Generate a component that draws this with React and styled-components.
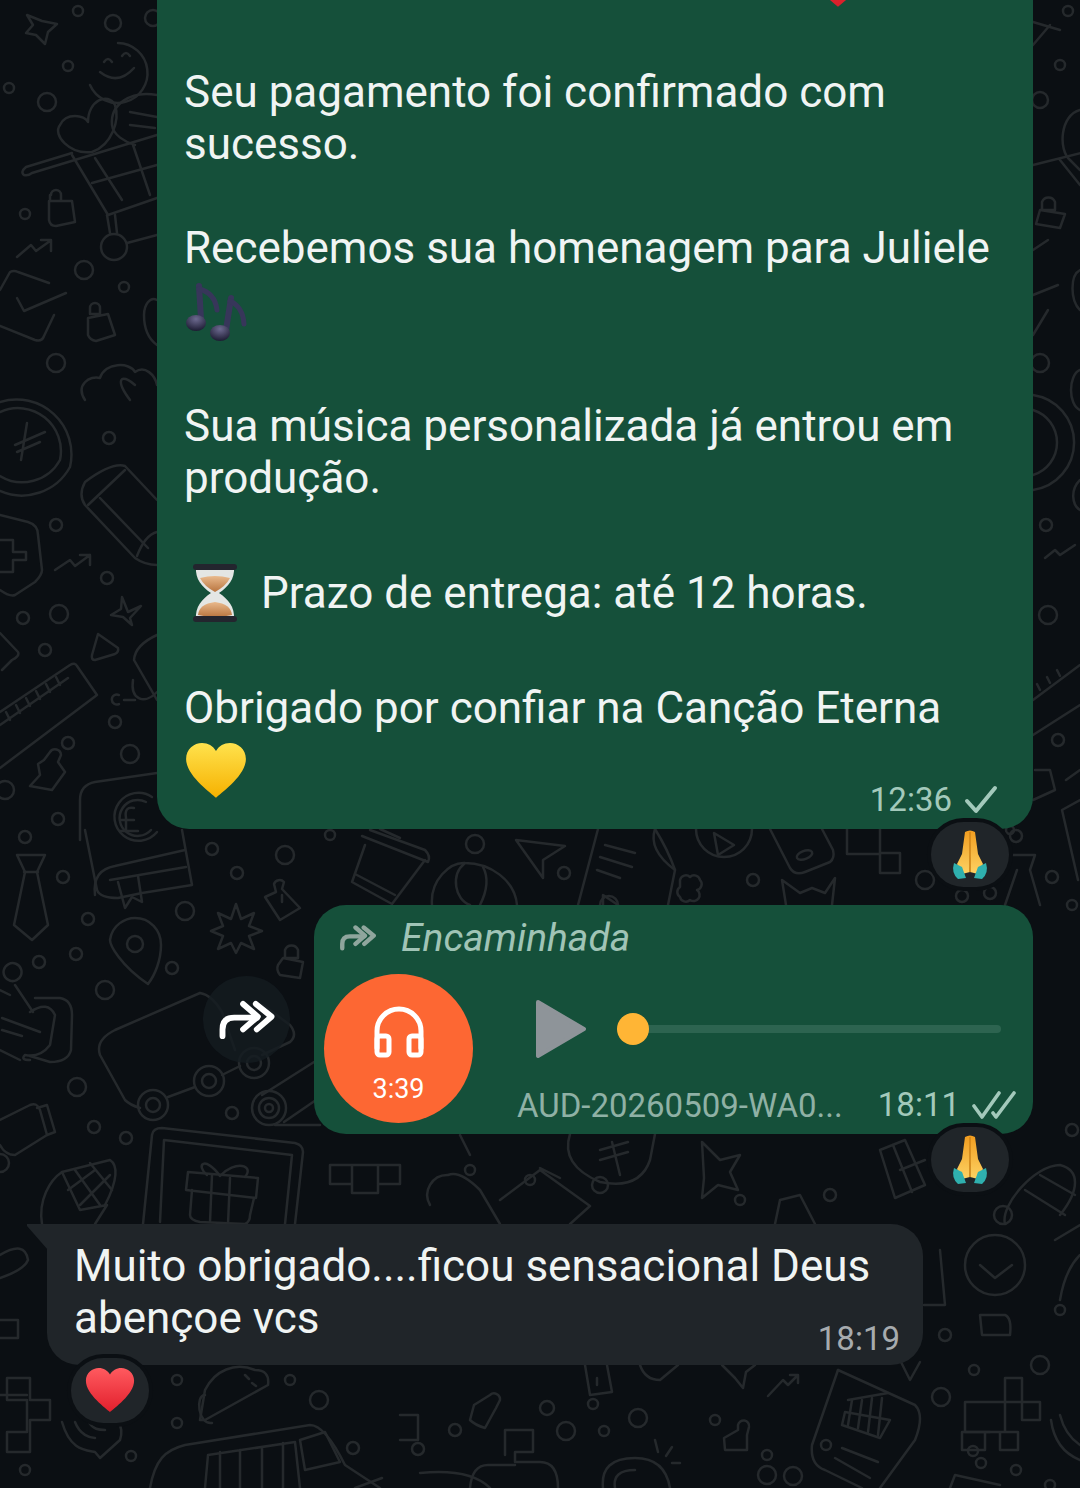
import React from 'react'
import styled, { createGlobalStyle } from 'styled-components'

const GlobalStyle = createGlobalStyle`
  html, body { margin: 0; padding: 0; background: #0b0f13; }
  * { box-sizing: border-box; }
`

const Screen = styled.div`
  position: relative;
  width: 1080px;
  height: 1488px;
  overflow: hidden;
  background: #0b0f13;
  font-family: Roboto, "Liberation Sans", sans-serif;
`

const Wallpaper = styled.svg`
  position: absolute;
  inset: 0;
  fill: none;
  stroke: #25292c;
  stroke-width: 2.5;
  stroke-linejoin: round;
  stroke-linecap: round;
`

const Thread = styled.div`
  position: relative;
  height: 100%;
  display: flex;
  flex-direction: column;
  justify-content: flex-end;
  padding: 0 47px 123px;
`

const Bubble = styled.div`
  position: relative;
  flex-shrink: 0;
  width: 876px;
  border-radius: 32px;
  color: #f0f4f3;
  font-size: 44px;
  white-space: nowrap;
  background: ${p => (p.$in ? '#202529' : '#15503a')};
`

const PaidBubble = styled(Bubble)`
  align-self: flex-end;
  padding: 0 35px 21px 27px;
  border-radius: 0 0 32px 32px;
`

const ThanksBubble = styled(Bubble)`
  margin-top: 90px;
  padding: 16px 23px 21px 27px;
  border-top-left-radius: 0;

  &::before {
    content: '';
    position: absolute;
    left: -20px;
    top: 0;
    width: 21px;
    height: 26px;
    background: #202529;
    clip-path: polygon(0 0, 100% 0, 100% 100%, 0 8%);
  }
`

const Line = styled.div`
  display: flex;
  align-items: ${p => (p.$emoji ? 'center' : 'baseline')};
  height: ${p => (p.$emoji ? 74 : 52)}px;
  line-height: 53px;
  margin-top: ${p => (p.$gap ? 52 : 0)}px;
`

const LastLine = styled(Line)`
  justify-content: space-between;
  align-items: ${p => (p.$emoji ? 'center' : 'flex-start')};
`

const TopHeart = styled.div`
  margin: 0 0 0 623px;
  transform: translateY(-10px);
`

const EmojiSlot = styled.div`
  display: flex;
  margin: 0 21px 0 6px;
`

const NoteSlot = styled.div`
  display: flex;
  margin-left: 1px;
`

const HeartSlot = styled.div`
  display: flex;
  margin-left: 1px;
`

const Meta = styled.div`
  display: flex;
  align-items: center;
  gap: 12px;
  height: 30px;
  font-size: 33px;
  line-height: 30px;
  color: ${p => (p.$in ? '#a6abae' : '#a3c9bb')};
  transform: translateY(${p => p.$y || 0}px);
`

const Reaction = styled.div`
  position: absolute;
  bottom: -58px;
  ${p => (p.$left ? 'left: 24px;' : 'right: 24px;')}
  display: flex;
  align-items: center;
  justify-content: center;
  width: 78px;
  height: 65px;
  border-radius: 33px;
  background: #202529;
  box-shadow: 0 0 0 4px #0b0f13;
`

const ForwardRow = styled.div`
  display: flex;
  flex-shrink: 0;
  align-items: center;
  justify-content: flex-end;
  gap: 24px;
  margin-top: 76px;
`

const ForwardButton = styled.div`
  display: flex;
  align-items: center;
  justify-content: center;
  width: 87px;
  height: 87px;
  border-radius: 50%;
  background: rgba(20, 27, 32, 0.8);
`

const AudioBubble = styled(Bubble)`
  width: 719px;
  padding: 0 0 11px 10px;
`

const ForwardedHead = styled.div`
  display: flex;
  align-items: center;
  gap: 25px;
  height: 69px;
  padding: 0 0 3px 16px;
  font-size: 39px;
  font-style: italic;
  color: #a0c4b6;
`

const AudioBody = styled.div`
  display: flex;
`

const Disc = styled.div`
  display: flex;
  flex-direction: column;
  align-items: center;
  flex-shrink: 0;
  width: 149px;
  height: 149px;
  padding-top: 32px;
  border-radius: 50%;
  background: #fd6733;
  color: #fff;
  font-size: 27px;
  line-height: 32px;
`

const DiscTime = styled.div`
  margin-top: 15px;
`

const AudioInfo = styled.div`
  flex: 1;
  display: flex;
  flex-direction: column;
`

const Player = styled.div`
  display: flex;
  align-items: center;
  height: 60px;
  margin-top: 25px;
  padding: 0 32px 0 62px;
`

const Scrubber = styled.div`
  position: relative;
  flex: 1;
  height: 8px;
  margin-left: 30px;
  border-radius: 4px;
  background: #2d6450;
`

const Knob = styled.div`
  position: absolute;
  left: 0;
  top: -12px;
  width: 32px;
  height: 32px;
  border-radius: 50%;
  background: #ffb535;
`

const FileRow = styled.div`
  display: flex;
  align-items: center;
  justify-content: space-between;
  height: 36px;
  margin-top: 28px;
  padding: 0 17px 0 44px;
  font-size: 33px;
  color: #8fb1a5;
`

const ForwardIcon = ({ size = 56, color = '#fff', weight = 6 }) => (
  <svg width={size} height={size * 0.7} viewBox="0 0 56 40" fill="none" stroke={color} strokeWidth={weight} strokeLinecap="round" strokeLinejoin="round">
    <path d="M3 37V30Q3 18 15 18H38" />
    <path d="M24 4L39 17L24 30" />
    <path d="M37 4L53 17L38 30" />
  </svg>
)

const Check = () => (
  <svg width="34" height="30" viewBox="0 0 34 30" fill="none" stroke="#a3c9bb" strokeWidth="4" strokeLinecap="round" strokeLinejoin="round">
    <path d="M3 16L12 26L31 3" />
  </svg>
)

const DoubleCheck = () => (
  <svg width="44" height="30" viewBox="0 0 44 30" fill="none" stroke="#a3c9bb" strokeWidth="3.6" strokeLinecap="round" strokeLinejoin="round">
    <path d="M2 16L10 27L27 3" />
    <path d="M21 23L24 27L42 3" />
  </svg>
)

const Heart = ({ id, from, to, width }) => (
  <svg width={width} height={width * 0.9} viewBox="0 0 62 56">
    <defs>
      <linearGradient id={id} x1="0" y1="0" x2="0" y2="1">
        <stop offset="0" stopColor={from} />
        <stop offset="1" stopColor={to} />
      </linearGradient>
    </defs>
    <path fill={`url(#${id})`} d="M31 55C27 51 1 33 1 16C1 6 9 0 17 0C23 0 28 3 31 8C34 3 39 0 45 0C53 0 61 6 61 16C61 33 35 51 31 55Z" />
  </svg>
)

const Pray = ({ id }) => (
  <svg width="38" height="50" viewBox="0 0 38 50">
    <defs>
      <linearGradient id={id} x1="0" y1="0" x2="0" y2="1">
        <stop offset="0" stopColor="#f19d1f" />
        <stop offset="1" stopColor="#fdd263" />
      </linearGradient>
    </defs>
    <path fill={`url(#${id})`} d="M14 2Q19-1 24 2L27 24L32 34L27 44L19 42L11 44L6 34L11 24Z" />
    <path fill="#c97f14" d="M18.4 2H19.6L19.8 42H18.2Z" />
    <path fill="#2fb0ae" d="M3 33L11 37L15 48L7 49Q0 43 3 33Z" />
    <path fill="#2fb0ae" d="M35 33L27 37L23 48L31 49Q38 43 35 33Z" />
  </svg>
)

const Notes = () => (
  <svg width="62" height="62" viewBox="0 0 62 62" fill="none">
    <defs>
      <radialGradient id="noteHead" cx="0.5" cy="0.25" r="0.8">
        <stop offset="0" stopColor="#6d6a90" />
        <stop offset="1" stopColor="#17162c" />
      </radialGradient>
    </defs>
    <g stroke="#37365a" strokeLinecap="round">
      <path d="M16 39L14 6" strokeWidth="6" />
      <path d="M14 9Q30 13 32 30" strokeWidth="5" />
      <path d="M41 50L46 18" strokeWidth="6" />
      <path d="M45 21Q58 27 59 44" strokeWidth="5" />
    </g>
    <ellipse cx="11" cy="43" rx="10" ry="8" fill="url(#noteHead)" />
    <ellipse cx="35" cy="53" rx="10" ry="8" fill="url(#noteHead)" />
  </svg>
)

const Hourglass = () => (
  <svg width="50" height="60" viewBox="0 0 50 60">
    <defs>
      <linearGradient id="sand" x1="0" y1="0" x2="0" y2="1">
        <stop offset="0" stopColor="#e9b98c" />
        <stop offset="1" stopColor="#b9753f" />
      </linearGradient>
    </defs>
    <path fill="#e4e6e4" d="M6 4H44C45 16 38 24 29 30C38 36 45 44 44 56H6C5 44 12 36 21 30C12 24 5 16 6 4Z" />
    <path fill="url(#sand)" d="M10 15Q25 11 40 15Q36 23 25 29Q14 23 10 15Z" />
    <path fill="url(#sand)" d="M8 52Q9 41 25 39Q41 41 42 52Q25 56 8 52Z" />
    <rect x="3" y="1" width="44" height="6" rx="3" fill="#23252e" />
    <rect x="3" y="53" width="44" height="6" rx="3" fill="#23252e" />
  </svg>
)

const Headphones = () => (
  <svg width="52" height="52" viewBox="0 0 52 52" fill="none" stroke="#fff" strokeWidth="5" strokeLinecap="round" strokeLinejoin="round">
    <path d="M4 42V25a22 22 0 0 1 44 0V42" />
    <rect x="4" y="30" width="12" height="19" rx="3" />
    <rect x="36" y="30" width="12" height="19" rx="3" />
  </svg>
)

const Play = () => (
  <svg width="52" height="60" viewBox="0 0 52 60">
    <path fill="#8e9499" stroke="#8e9499" strokeWidth="4" strokeLinejoin="round" d="M3 3L49 30L3 57Z" />
  </svg>
)

// wallpaper: small rings, then the bigger line drawings
const rings = [
  [78, 11, 5], [113, 23, 8], [153, 18, 8], [68, 66, 5], [9, 88, 5], [47, 102, 9], [25, 214, 5], [84, 270, 9], [124, 287, 5], [56, 363, 9],
  [109, 438, 6], [56, 525, 6], [107, 578, 6], [59, 614, 9], [23, 618, 6], [45, 650, 6], [68, 743, 6], [115, 722, 6], [130, 754, 9], [58, 819, 6], [5, 790, 9],
  [25, 837, 6], [63, 877, 6], [88, 919, 6], [76, 954, 6], [39, 962, 6], [105, 990, 9], [185, 911, 9], [212, 849, 6], [237, 873, 6], [285, 855, 9], [172, 968, 6],
  [77, 1087, 9], [94, 1127, 6], [126, 1138, 6], [232, 1113, 6], [0, 1163, 9], [135, 944, 8],
  [330, 835, 5], [475, 844, 9], [564, 873, 6], [753, 880, 6], [925, 880, 9], [962, 896, 6], [990, 893, 6], [1016, 836, 6], [1052, 877, 6], [1010, 830, 4],
  [1068, 11, 5], [1060, 65, 5], [1040, 100, 8], [1040, 363, 9], [1046, 525, 6], [1048, 615, 9], [1058, 740, 6], [1072, 905, 5],
  [177, 1380, 5], [290, 1380, 5], [319, 1400, 9], [177, 1423, 5], [131, 1456, 5], [25, 1470, 5], [353, 1448, 6],
  [547, 1408, 7], [455, 1430, 6], [418, 1449, 6], [566, 1431, 9], [604, 1431, 5], [638, 1418, 9], [593, 1404, 5], [715, 1420, 5], [767, 1475, 9], [793, 1476, 9], [767, 1455, 5], [826, 1445, 5],
  [941, 1397, 9], [973, 1451, 5], [981, 1463, 5], [1016, 1470, 5], [1050, 1485, 5], [974, 1370, 5], [1040, 1365, 9],
  [470, 1170, 5], [600, 1185, 8], [530, 1180, 5], [740, 1200, 5], [830, 1195, 6], [1072, 1130, 6], [1003, 1215, 9], [945, 1335, 6], [1060, 1310, 5],
]

const lines = [
  // top left: smile, heart, cart
  'M27 15L42 21L57 24L48 32L45 44L36 35L26 33L33 25Z',
  'M118 43a30 30 0 1 1-28 42', 'M100 72Q118 86 134 68', 'M104 62q4-6 8 0', 'M122 56q4-6 8 0',
  'M92 152C70 155 52 135 60 125C66 112 85 115 88 122C88 100 108 92 115 105C120 120 112 145 92 152',
  'M157 95C130 90 110 105 112 125C113 135 125 142 135 145', 'M130 112L157 117', 'M130 125L155 128',
  'M72 153L26 167Q20 172 24 175Q28 176 32 173L157 135', 'M72 155L108 215L157 198', 'M95 158L122 200', 'M133 145L150 195', 'M92 183L157 165',
  'M107 215L110 233', 'M115 215L117 233', 'M127 243L157 235', 'M101 247a13 13 0 1 0 26 0a13 13 0 1 0-26 0',
  'M51 195a5 5 0 0 1 10 0V201H50V195Z M49 201H72L75 222L56 226Q50 226 49 220Z',
  'M90 308a5 5 0 0 1 10 0V314H90Z M88 318L108 314L115 335L96 341Q90 340 88 335Z',
  'M17 257L31 245L36 251L50 241M41 240H51V251',
  'M0 290L10 272Q14 270 18 272L49 283', 'M17 298L24 311L66 293', 'M0 326L35 340Q42 342 44 336L54 315',
  'M157 300C150 296 144 305 144 315C144 330 150 340 157 345',
  'M85 400C75 385 90 375 100 378C105 362 130 362 135 372C145 365 155 375 157 385', 'M130 400C115 380 120 372 135 385',
  // left column
  'M0 402a55 55 0 0 1 70 65a55 55 0 0 1-70 24', 'M0 412a43 43 0 0 1 60 48a43 43 0 0 1-60 16', 'M27 423L21 460M15 445L45 432M17 452L40 442',
  'M157 500L125 466Q112 462 85 482Q78 495 85 505L135 558Q145 565 157 565', 'M88 505L125 470', 'M100 498L148 548', 'M157 532Q145 535 137 556',
  'M0 515L28 522Q38 525 38 535L42 570Q42 575 35 582L15 595Q10 597 0 590', 'M0 540H13V552H26V560H13V572H0',
  'M55 570L70 560L75 566L90 555M80 555H90V565',
  'M122 597L128 612L141 606L130 618L132 625L123 617L111 615L121 609Z',
  'M98 634L118 648Q119 652 115 654L95 660Q91 660 92 655Z',
  'M0 633L18 652Q20 656 12 660L2 670', 'M0 712L70 665Q75 662 77 666L97 695L0 768', 'M0 725L68 678M10 720L6 712M20 713L16 705M30 706L26 698M40 699L36 691M50 692L46 684M60 685L56 677',
  'M119 695a5 5 0 1 0 0 9M124 700H135M157 635Q135 645 134 660L157 700M133 680C130 700 145 705 157 692',
  'M50 752a6 6 0 0 1 11 3L58 762L65 772L52 790L30 786L40 775L38 764L44 760Z',
  'M80 840V800Q80 785 95 782L157 773', 'M152 797a24 24 0 1 0 5 35', 'M146 802a18 18 0 1 0 5 28', 'M134 808Q124 806 126 818V830M120 820H134M120 831H138',
  // book, tie, pin, star
  'M85 830L97 890Q100 898 118 898L142 893L192 885L182 830', 'M95 895Q92 870 115 866L185 850', 'M110 880L186 867', 'M118 882L125 908L132 897L142 902L138 876',
  'M17 855H45L37 872L48 925L32 940L14 925L25 872Z', 'M24 872H38',
  'M148 984C120 965 110 945 110 940C112 925 125 918 135 918C150 918 161 930 161 945C161 960 155 975 148 984',
  'M236 904L241 919L254 913L249 926L262 931L249 936L254 949L241 943L236 953L231 943L218 949L223 936L211 931L223 926L218 913L231 919Z',
  'M274 884a6 6 0 0 1 10-2L282 889L300 908L280 920L265 897L276 892Z', 'M282 895V902',
  'M285 950a7 7 0 0 1 13 0V958H285Z M283 958L303 962L300 978L280 975Q276 970 278 965Z',
  // perfume, big card and reel
  'M5 977a9 9 0 1 1 16-8a9 9 0 0 1-16 8M15 985L33 1012M0 990L10 995M35 998H60Q72 1000 72 1015L71 1050Q68 1062 50 1062L30 1056M0 1050L20 1060',
  'M30 1012Q48 1000 55 1015L50 1045Q40 1058 25 1055Q20 1060 30 1060', 'M2 1018L40 1032M2 1030L22 1036',
  'M200 993L115 1030Q95 1040 100 1055L125 1100Q130 1105 140 1108', 'M200 993Q212 995 222 1012L235 1050', 'M263 1005L290 1025Q298 1035 290 1042L262 1055',
  'M138 1105a15 15 0 1 0 30 0a15 15 0 1 0-30 0M146 1105a7 7 0 1 0 14 0a7 7 0 1 0-14 0',
  'M194 1081a15 15 0 1 0 30 0a15 15 0 1 0-30 0M202 1081a7 7 0 1 0 14 0a7 7 0 1 0-14 0',
  'M239 1063a15 15 0 1 0 30 0a15 15 0 1 0-30 0M247 1063a7 7 0 1 0 14 0a7 7 0 1 0-14 0',
  'M252 1108a17 17 0 1 0 34 0a17 17 0 1 0-34 0M259 1108a10 10 0 1 0 20 0a10 10 0 1 0-20 0M265 1108a4 4 0 1 0 8 0a4 4 0 1 0-8 0',
  'M168 1097L195 1087', 'M222 1075L240 1066', 'M275 1125H320M284 1122L316 1100M262 1095L314 1062',
  'M0 1120L30 1105Q37 1102 40 1110L47 1135L15 1155Q5 1155 0 1145', 'M37 1108L47 1105L55 1132L47 1135',
  // corn and gift frame
  'M42 1224C38 1200 50 1180 62 1172L80 1210L107 1205L95 1224', 'M62 1172L110 1160C118 1165 118 1180 105 1205', 'M75 1170L100 1205M90 1163L112 1190M68 1190L95 1170M80 1205L110 1175',
  'M143 1224L152 1135Q153 1128 162 1128L295 1143Q303 1145 303 1152L295 1224', 'M160 1222L164 1140L292 1155L285 1224',
  'M188 1172L258 1178L256 1198L186 1190Z', 'M192 1190L190 1215Q190 1220 200 1222L245 1224Q250 1222 250 1215L254 1198', 'M212 1175L210 1222M230 1178L228 1224', 'M220 1176C205 1155 195 1165 207 1175M220 1176C235 1160 255 1165 245 1177',
  // strip between the first two bubbles
  'M365 845L352 882L392 904L425 860', 'M362 836L428 862Q431 856 425 850L370 830', 'M355 874L395 895', 'M380 829L400 838',
  'M432 905C430 880 450 862 465 863C490 863 515 880 517 905', 'M465 863C450 875 455 900 470 905', 'M483 867C490 880 485 895 480 905',
  'M516 840L565 846L543 860L543 878Z', 'M598 829L578 905', 'M655 829Q668 850 675 870L668 905', 'M655 829Q648 850 675 870', 'M605 845L635 853', 'M600 857L632 867', 'M597 870L620 878',
  'M696 829a28 28 0 0 0 56 0', 'M714 833L734 845L718 855Z', 'M600 905a9 9 0 0 1 18 0', 'M603 905V895L618 905', 'M770 829L790 868Q795 876 805 872L830 862Q835 858 833 850L822 829', 'M797 858a8 4 -20 1 0 15-6a8 4 -20 1 0-15 6',
  'M847 829V854H880V873H900V853H880V829', 'M680 880a6 6 0 0 1 10-3a6 6 0 0 1 10 3a6 6 0 0 1-3 10a6 6 0 0 1-7 10a6 6 0 0 1-10-3a6 6 0 0 1 0-10Z',
  'M786 905L782 880L800 893L812 888L825 893L835 878L832 905', 'M1012 855H1035L1030 870L1040 905M1017 870L1005 905',
  // right edge
  'M1060 30L1033 22M1033 45L1050 25', 'M1080 110C1060 115 1058 150 1070 160L1080 170', 'M1033 165L1085 152M1060 160L1080 185',
  'M1042 202a7 7 0 0 1 13 0V210H1042Z M1040 210L1065 214L1060 228L1036 224Z', 'M1033 250L1048 240', 'M1033 295L1058 285M1033 335L1048 310',
  'M1080 270C1070 275 1070 300 1080 310M1080 370C1068 375 1068 405 1080 410M1080 480C1070 490 1072 505 1080 510',
  'M1033 395a48 48 0 0 1 0 95M1033 410a34 34 0 0 1 0 65', 'M1045 558L1055 550L1060 555L1075 545', 'M1033 700L1080 665M1033 735L1080 705M1040 690L1037 684M1050 683L1047 677M1060 676L1057 670',
  'M1035 770H1050L1055 790L1033 800', 'M1080 800L1062 810L1078 880', 'M1066 780L1080 770',
  // bubble two underside
  'M352 1165H378V1193H352ZM330 1165H352V1184H330ZM378 1165H400V1184H378Z',
  'M570 1134Q560 1165 600 1182Q640 1190 650 1160L655 1134', 'M612 1142L620 1175M600 1150L628 1142M600 1160L628 1152',
  'M702 1142L720 1160L740 1155L730 1172L738 1190L718 1185L702 1198L704 1178Z', 'M430 1205a20 20 0 0 1 18-30Q460 1170 480 1190L500 1224', 'M460 1135L470 1155',
  'M540 1168L560 1178M500 1200L540 1170L590 1206L570 1224', 'M775 1224L780 1200L800 1195L815 1224', 'M880 1150L905 1140L925 1185L895 1198Z', 'M900 1170L925 1160M893 1145L912 1192',
  'M1005 1224C1000 1205 1035 1165 1060 1165C1080 1170 1080 1190 1060 1215', 'M1025 1190L1065 1215M1040 1175L1075 1195',
  // right of the last bubble
  'M965 1265a30 30 0 1 0 60 0a30 30 0 1 0-60 0', 'M980 1265L995 1278L1012 1265', 'M940 1250L945 1305H924', 'M980 1315H1005Q1012 1318 1010 1335H982Z', 'M1055 1240L1080 1225M1060 1300Q1065 1270 1080 1255',
  // bottom left
  'M7 1378H30V1400H50V1420H30V1452H7V1432H27V1400H7Z', 'M0 1395H27',
  'M0 1255Q25 1240 28 1260Q24 1270 0 1278', 'M0 1320H18V1338H0',
  'M62 1422C70 1450 85 1450 95 1452L100 1458L120 1440C125 1425 115 1415 105 1412', 'M75 1422C80 1435 90 1438 95 1438M88 1420C92 1430 100 1430 105 1430',
  'M205 1420L268 1385Q270 1370 255 1370C235 1362 215 1370 205 1390L200 1420Z', 'M205 1395C195 1395 198 1425 212 1423', 'M245 1375L249 1379M252 1383L256 1386',
  'M150 1488C155 1460 165 1450 185 1445L310 1425Q325 1425 345 1465L380 1488', 'M205 1488L208 1455L295 1442L300 1488M220 1452V1488M240 1450V1488M262 1447V1488M283 1443V1488',
  'M300 1440L325 1432L340 1462L305 1470Z', 'M355 1488L382 1478',
  // bottom strip
  'M400 1415H418V1440H400', 'M490 1395a6 6 0 0 1 10 5L496 1408L485 1428Q475 1425 470 1420L474 1405L490 1395Z',
  'M505 1455V1430H533V1452H515V1462H540Q558 1462 558 1488M470 1488Q472 1465 488 1465H515', 'M420 1473Q470 1468 490 1488',
  'M603 1488Q600 1458 635 1458Q665 1458 670 1488M615 1488Q612 1470 635 1470', 'M655 1440L658 1452M672 1447L666 1456M680 1463H672',
  'M585 1365L590 1395L612 1392L607 1365', 'M597 1378V1385', 'M640 1365Q645 1380 660 1380L678 1365', 'M722 1365L735 1378L743 1388L746 1372L755 1365',
  'M768 1396L783 1380L788 1385L798 1375M790 1375H798V1383',
  'M738 1425a5 5 0 0 1 11 2L747 1435L747 1450L725 1450L724 1438L738 1430Z',
  'M838 1370L915 1405Q925 1415 915 1440L880 1488', 'M838 1370L812 1445Q810 1465 825 1470L862 1488',
  'M848 1400L888 1393M845 1412L890 1420L880 1438L842 1425Z', 'M852 1400L848 1425M862 1400L858 1428M872 1398L868 1432M882 1398L878 1435', 'M842 1448L878 1462M835 1458L870 1478',
  'M962 1450V1432H990M962 1450H985V1432', 'M1005 1378H1022V1402H1040V1420H1022V1402H1005ZM965 1402H1005V1432H965V1402M1000 1432H1018V1450H1000V1432',
  'M1051 1420Q1055 1450 1080 1460', 'M1060 1415Q1065 1435 1080 1445', 'M950 1488L955 1475L1000 1485', 'M900 1360L910 1380L920 1362',
]

const Doodles = () => (
  <Wallpaper width="1080" height="1488" viewBox="0 0 1080 1488">
    {rings.map(([cx, cy, r], i) => <circle key={i} cx={cx} cy={cy} r={r} />)}
    {lines.map((d, i) => <path key={i} d={d} />)}
  </Wallpaper>
)

export default function App() {
  return (
    <Screen>
      <GlobalStyle />
      <Doodles />
      <Thread>
        <PaidBubble>
          <Line>
            <TopHeart><Heart id="topHeart" from="#f3323a" to="#d81f2a" width={62} /></TopHeart>
          </Line>
          <Line $gap>Seu pagamento foi confirmado com</Line>
          <Line>sucesso.</Line>
          <Line $gap>Recebemos sua homenagem para Juliele</Line>
          <Line $emoji><NoteSlot><Notes /></NoteSlot></Line>
          <Line $gap>Sua música personalizada já entrou em</Line>
          <Line>produção.</Line>
          <Line $gap $emoji><EmojiSlot><Hourglass /></EmojiSlot>Prazo de entrega: até 12 horas.</Line>
          <Line $gap>Obrigado por confiar na Canção Eterna</Line>
          <LastLine $emoji>
            <HeartSlot><Heart id="yellowHeart" from="#ffe24d" to="#f6b100" width={62} /></HeartSlot>
            <Meta $y={29}>12:36 <Check /></Meta>
          </LastLine>
          <Reaction><Pray id="prayOne" /></Reaction>
        </PaidBubble>

        <ForwardRow>
          <ForwardButton><ForwardIcon /></ForwardButton>
          <AudioBubble>
            <ForwardedHead>
              <ForwardIcon size={36} color="#8fa69d" weight={7} />
              Encaminhada
            </ForwardedHead>
            <AudioBody>
              <Disc>
                <Headphones />
                <DiscTime>3:39</DiscTime>
              </Disc>
              <AudioInfo>
                <Player>
                  <Play />
                  <Scrubber><Knob /></Scrubber>
                </Player>
                <FileRow>
                  <span>AUD-20260509-WA0...</span>
                  <Meta>18:11 <DoubleCheck /></Meta>
                </FileRow>
              </AudioInfo>
            </AudioBody>
            <Reaction><Pray id="prayTwo" /></Reaction>
          </AudioBubble>
        </ForwardRow>

        <ThanksBubble $in>
          <Line>Muito obrigado....ficou sensacional Deus</Line>
          <LastLine>
            abençoe vcs
            <Meta $in $y={32}>18:19</Meta>
          </LastLine>
          <Reaction $left><Heart id="redHeart" from="#ff5a5f" to="#e21f2c" width={50} /></Reaction>
        </ThanksBubble>
      </Thread>
    </Screen>
  )
}
